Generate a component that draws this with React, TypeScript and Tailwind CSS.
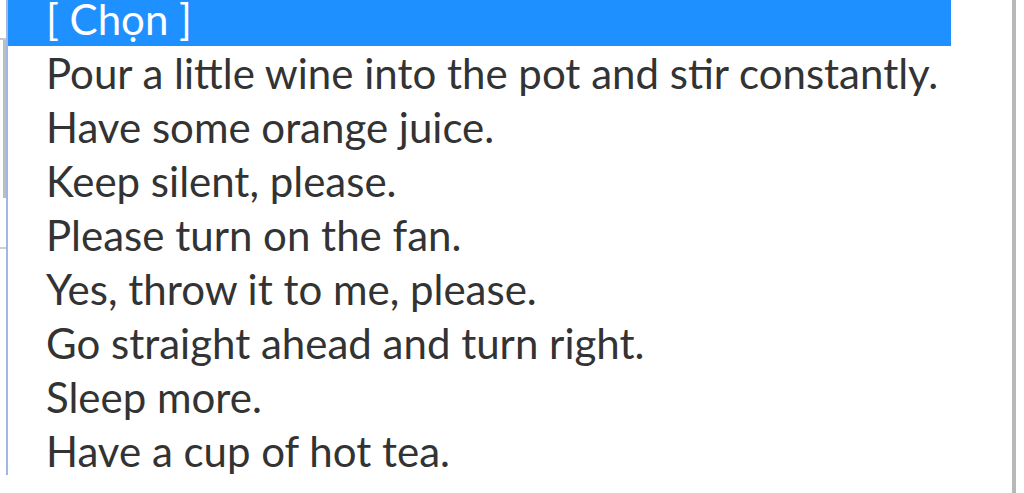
import React from 'react';

const OPTIONS = [
  'Pour a little wine into the pot and stir constantly.',
  'Have some orange juice.',
  'Keep silent, please.',
  'Please turn on the fan.',
  'Yes, throw it to me, please.',
  'Go straight ahead and turn right.',
  'Sleep more.',
  'Have a cup of hot tea.',
];

export default function App() {
  return (
    <div className="relative h-[493px] w-[1024px] overflow-hidden bg-white" style={{ fontFamily: 'Lato, "Open Sans", sans-serif' }}>
      {/* page content peeking out behind the list */}
      <div className="absolute left-0 top-[38px] h-[2px] w-[6px] bg-[#c8c8c8]" />
      <div className="absolute left-[3px] top-[40px] h-[158px] w-[3px] bg-[#bdbdbd]" />
      <div className="absolute left-0 top-[247px] h-[2px] w-[6px] bg-[#cfcfcf]" />
      <div className="absolute left-[1012px] top-0 h-[493px] w-[4px] bg-[#b8b8b8]" />

      <div className="ml-[6px] h-[475px] w-[945px] overflow-hidden border-l-2 border-[#9fb8e2]">
        <ul className="-mt-[8px]">
          <li className="flex h-[54px] items-center bg-[#1e90ff] pl-[38px] text-[42px] leading-none text-white">
            [ Chọn ]
          </li>
          {OPTIONS.map((opt) => (
            <li key={opt} className="flex h-[54px] items-center whitespace-nowrap pl-[38px] text-[42px] leading-none text-[#333]">
              {opt}
            </li>
          ))}
        </ul>
      </div>
    </div>
  );
}
